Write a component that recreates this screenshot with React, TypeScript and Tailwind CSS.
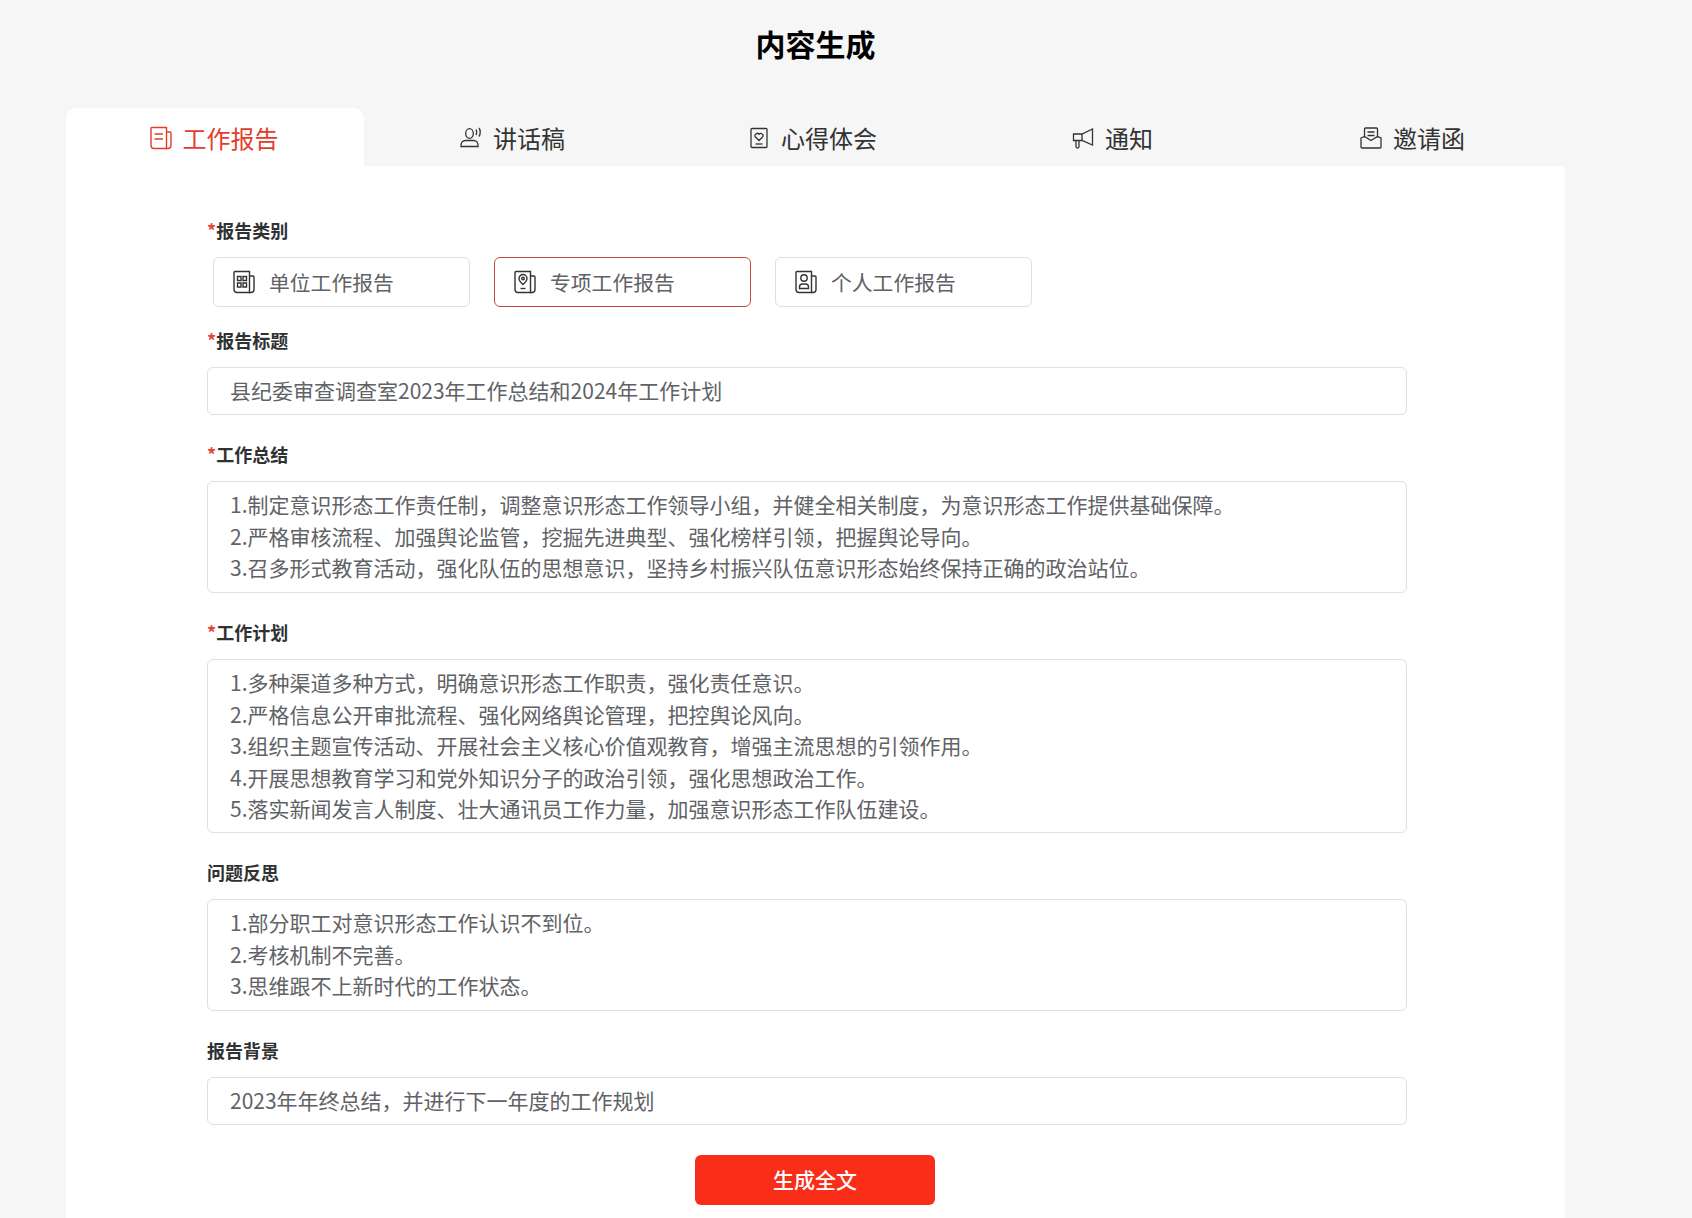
import React from "react";

const font = "font-['Noto_Sans_CJK_SC','Noto_Sans',sans-serif]";

const PaperBase = ({ children }: { children?: React.ReactNode }) => (
  <svg viewBox="0 0 24 24" fill="none" stroke="currentColor" strokeWidth="1.4" className="w-6 h-6 shrink-0">
    <path d="M2 2.500a1 1 0 0 1 1-1h14.500v21H5a3 3 0 0 1-3-3z" />
    <path d="M17.500 6h3.500a1 1 0 0 1 1 1v12.500a3 3 0 0 1-3 3h-2" />
    {children}
  </svg>
);

const ReportIcon = () => (
  <PaperBase>
    <path d="M5.500 8h8.500M5.500 13h8.500" />
  </PaperBase>
);

const UnitIcon = () => (
  <PaperBase>
    <path d="M5.500 6.500h3.500v4H5.500zM11 6.500h3.500v4H11zM5.500 13h3.500v4H5.500zM11 13h3.500v4H11z" />
  </PaperBase>
);

const PinIcon = () => (
  <PaperBase>
    <path d="M10 4.500a4 4 0 0 1 4 4c0 2.600-4 6-4 6s-4-3.400-4-6a4 4 0 0 1 4-4z" />
    <circle cx="10" cy="8.500" r="1.300" />
    <path d="M7.500 18.500h5" />
  </PaperBase>
);

const PersonIcon = () => (
  <PaperBase>
    <circle cx="10" cy="8" r="3.200" />
    <path d="M5.500 18.500V17a3 3 0 0 1 3-3h3a3 3 0 0 1 3 3v1.500z" />
  </PaperBase>
);

const SpeechIcon = () => (
  <svg viewBox="0 0 24 24" fill="none" stroke="currentColor" strokeWidth="1.3" className="w-6 h-6 shrink-0">
    <ellipse cx="10.500" cy="7.500" rx="3.800" ry="4.800" />
    <path d="M2 20.500v-1.500a4.500 4.500 0 0 1 4.500-4.500h8a4.500 4.500 0 0 1 4.500 4.500v1.500z" />
    <path d="M17 3.500c.9 1.200.9 4 0 5.500M20 2c1.600 2 1.600 6.500 0 8.500" />
  </svg>
);

const HeartDocIcon = () => (
  <svg viewBox="0 0 24 24" fill="none" stroke="currentColor" strokeWidth="1.3" className="w-6 h-6 shrink-0">
    <path d="M5 2.500h14a1 1 0 0 1 1 1v17a1 1 0 0 1-1 1H5a1 1 0 0 1-1-1v-17a1 1 0 0 1 1-1z" />
    <path d="M12 14.500l-3.500-3.500a2.200 2.200 0 0 1 3.500-2.700 2.200 2.200 0 0 1 3.500 2.700z" />
    <path d="M8.500 18h7" />
  </svg>
);

const HornIcon = () => (
  <svg viewBox="0 0 24 24" fill="none" stroke="currentColor" strokeWidth="1.3" className="w-6 h-6 shrink-0">
    <path d="M2.500 8h8.500l10.500-5v16l-10.500-4.500H2.500z" />
    <path d="M11 8v6.500M5 14.500v6a1.500 1.500 0 0 0 3 0v-6" />
  </svg>
);

const LetterIcon = () => (
  <svg viewBox="0 0 24 24" fill="none" stroke="currentColor" strokeWidth="1.3" className="w-6 h-6 shrink-0">
    <path d="M5.500 11.500V3a1 1 0 0 1 1-1h11a1 1 0 0 1 1 1v8.500" />
    <path d="M8.500 6h7M8.500 9.500h7" />
    <path d="M2 12l3.500-1.500 6.500 4 6.500-4L22 12v9a1 1 0 0 1-1 1H3a1 1 0 0 1-1-1z" />
  </svg>
);

const tabs = [
  { name: "工作报告", icon: ReportIcon },
  { name: "讲话稿", icon: SpeechIcon },
  { name: "心得体会", icon: HeartDocIcon },
  { name: "通知", icon: HornIcon },
  { name: "邀请函", icon: LetterIcon },
];

const categories = [
  { name: "单位工作报告", icon: UnitIcon },
  { name: "专项工作报告", icon: PinIcon },
  { name: "个人工作报告", icon: PersonIcon },
];

const Label = ({ text, required, className }: { text: string; required?: boolean; className?: string }) => (
  <div className={`h-[26px] leading-[26px] text-[18px] font-bold text-[#303133] ${className}`}>
    {required && <span className="text-[#e5443a]">*</span>}
    {text}
  </div>
);

const Field = ({ lines, className }: { lines: string[]; className?: string }) => (
  <div className={`border border-[#dcdfe6] rounded-[6px] pl-[22px] pr-4 text-[21px] leading-[31.6px] text-[#606266] ${className}`}>
    {lines.map((line) => (
      <div key={line}>{line}</div>
    ))}
  </div>
);

export default function App() {
  return (
    <div className={`h-[1218px] overflow-hidden bg-[#f6f6f6] ${font}`}>
      <h1 className="pl-[66px] w-[1565px] pt-[22px] h-[108px] text-center text-[30px] leading-[42px] font-bold text-black">
        内容生成
      </h1>

      <div className="ml-[66px] w-[1499px]">
        <div className="flex h-[58px]">
          {tabs.map((tab, i) => {
            const Icon = tab.icon;
            return (
              <div
                key={tab.name}
                className={`flex items-center justify-center gap-[10px] pt-[2px] text-[24px] ${
                  i === 0
                    ? "w-[298px] pr-[3px] bg-white rounded-t-[10px] text-[#e23d2b]"
                    : "w-[300px] pr-[4px] text-[#333333]"
                }`}
              >
                <Icon />
                <span>{tab.name}</span>
              </div>
            );
          })}
        </div>

        <div className="bg-white h-[1100px] pl-[141px] pr-[158px] pt-[51px]">
          <Label text="报告类别" required className="mb-[14px]" />
          <div className="flex gap-[24px] ml-[6px]">
            {categories.map((cat, i) => {
              const Icon = cat.icon;
              return (
                <div
                  key={cat.name}
                  className={`w-[257px] h-[50px] flex items-center gap-[13px] pl-[18px] border rounded-[6px] text-[20.8px] text-[#606266] ${
                    i === 1 ? "border-[#c8473a]" : "border-[#dcdfe6]"
                  }`}
                >
                  <span className="text-[#333333]">
                    <Icon />
                  </span>
                  <span className="pt-[2px]">{cat.name}</span>
                </div>
              );
            })}
          </div>

          <Label text="报告标题" required className="mt-[20px] mb-[14px]" />
          <Field lines={["县纪委审查调查室2023年工作总结和2024年工作计划"]} className="h-[48px] flex items-center" />

          <Label text="工作总结" required className="mt-[26px] mb-[14px]" />
          <Field
            className="h-[112px] pt-[7px]"
            lines={[
              "1.制定意识形态工作责任制，调整意识形态工作领导小组，并健全相关制度，为意识形态工作提供基础保障。",
              "2.严格审核流程、加强舆论监管，挖掘先进典型、强化榜样引领，把握舆论导向。",
              "3.召多形式教育活动，强化队伍的思想意识，坚持乡村振兴队伍意识形态始终保持正确的政治站位。",
            ]}
          />

          <Label text="工作计划" required className="mt-[26px] mb-[14px]" />
          <Field
            className="h-[174px] pt-[7px]"
            lines={[
              "1.多种渠道多种方式，明确意识形态工作职责，强化责任意识。",
              "2.严格信息公开审批流程、强化网络舆论管理，把控舆论风向。",
              "3.组织主题宣传活动、开展社会主义核心价值观教育，增强主流思想的引领作用。",
              "4.开展思想教育学习和党外知识分子的政治引领，强化思想政治工作。",
              "5.落实新闻发言人制度、壮大通讯员工作力量，加强意识形态工作队伍建设。",
            ]}
          />

          <Label text="问题反思" className="mt-[26px] mb-[14px]" />
          <Field
            className="h-[112px] pt-[7px]"
            lines={["1.部分职工对意识形态工作认识不到位。", "2.考核机制不完善。", "3.思维跟不上新时代的工作状态。"]}
          />

          <Label text="报告背景" className="mt-[26px] mb-[14px]" />
          <Field lines={["2023年年终总结，并进行下一年度的工作规划"]} className="h-[48px] flex items-center" />

          <button className="block ml-[488px] mt-[30px] w-[240px] h-[50px] bg-[#fa2d19] rounded-[6px] text-white text-[21px] font-medium">
            生成全文
          </button>
        </div>
      </div>
    </div>
  );
}
